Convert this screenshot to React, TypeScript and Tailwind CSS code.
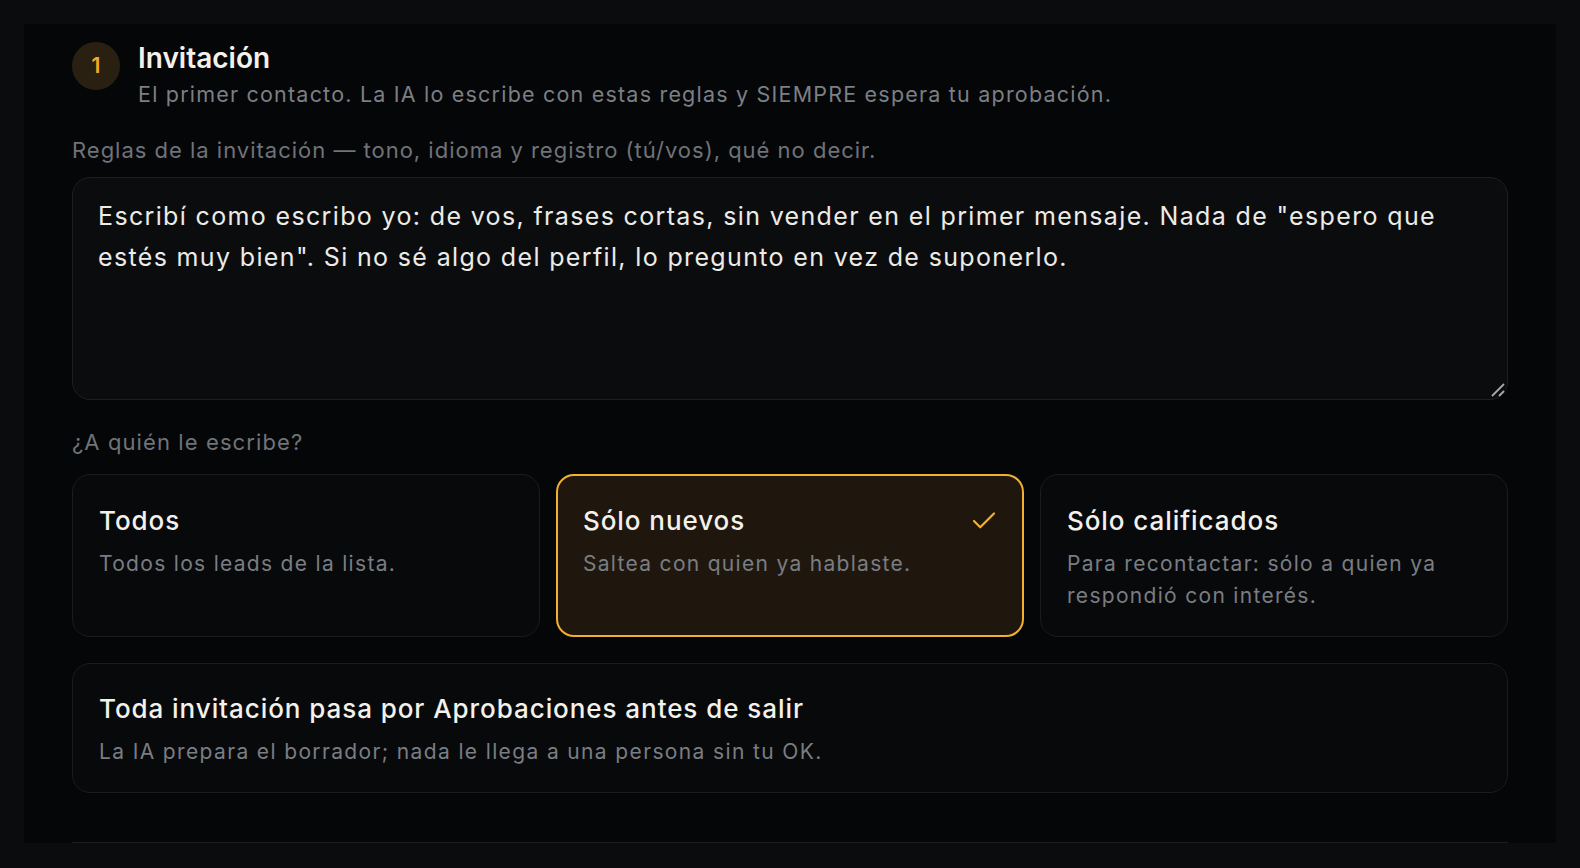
import React, { useState } from "react";
import { Check } from "lucide-react";

type Audience = "todos" | "nuevos" | "calificados";

const AUDIENCES: { id: Audience; title: string; desc: string }[] = [
  { id: "todos", title: "Todos", desc: "Todos los leads de la lista." },
  { id: "nuevos", title: "Sólo nuevos", desc: "Saltea con quien ya hablaste." },
  {
    id: "calificados",
    title: "Sólo calificados",
    desc: "Para recontactar: sólo a quien ya respondió con interés.",
  },
];

const DEFAULT_RULES =
  'Escribí como escribo yo: de vos, frases cortas, sin vender en el primer mensaje. Nada de "espero que estés muy bien". Si no sé algo del perfil, lo pregunto en vez de suponerlo.';

export default function App() {
  const [rules, setRules] = useState(DEFAULT_RULES);
  const [audience, setAudience] = useState<Audience>("nuevos");

  return (
    <div className="min-h-screen bg-[#0b0c0e] px-[24px] pt-[24px] pb-[25px] font-['Inter',sans-serif] antialiased">
      <div className="bg-[#050608] px-[48px] pt-[16px]">
        <section className="border-b border-[#1c1d21] pb-[49px]">
          {/* Step header */}
          <div className="flex items-start gap-[18px]">
            <div className="mt-[2px] flex h-[48px] w-[48px] shrink-0 items-center justify-center rounded-full bg-[#2a2012] text-[21px] font-semibold text-[#f3a928]">
              1
            </div>
            <div>
              <h2 className="text-[28px] font-semibold leading-[36px] text-[#f3f1ea]">Invitación</h2>
              <p className="mt-[3px] text-[21.5px] leading-[30px] tracking-[0.056em] text-[#7c7f84]">
                El primer contacto. La IA lo escribe con estas reglas y SIEMPRE espera tu aprobación.
              </p>
            </div>
          </div>

          {/* Rules */}
          <label
            htmlFor="invite-rules"
            className="mt-[26px] block text-[22px] leading-[30px] tracking-[0.045em] text-[#707378]"
          >
            Reglas de la invitación — tono, idioma y registro (tú/vos), qué no decir.
          </label>
          <div className="relative mt-[12px]">
            <textarea
              id="invite-rules"
              value={rules}
              onChange={(e) => setRules(e.target.value)}
              className="block h-[223px] w-full resize-none rounded-[18px] border border-[#1e1f23] bg-[#0b0c0e] px-[25px] pt-[18px] text-[25px] leading-[41px] tracking-[0.054em] text-[#ecebe6] outline-none"
            />
            {/* resize grip */}
            <svg
              className="pointer-events-none absolute right-[3px] bottom-[3px] h-[14px] w-[14px]"
              viewBox="0 0 14 14"
              fill="none"
              stroke="#a9a9a9"
              strokeWidth="1.8"
            >
              <path d="M1 13 13 1" />
              <path d="M8 13 13 8" />
            </svg>
          </div>

          {/* Audience */}
          <div className="mt-[27px] text-[22px] leading-[30px] tracking-[0.05em] text-[#707378]">
            ¿A quién le escribe?
          </div>
          <div className="mt-[17px] grid grid-cols-3 gap-[16px]">
            {AUDIENCES.map((a) => {
              const active = audience === a.id;
              return (
                <button
                  key={a.id}
                  type="button"
                  onClick={() => setAudience(a.id)}
                  className={`flex flex-col justify-start rounded-[18px] text-left ${
                    active
                      ? "border-2 border-[#f2b032] bg-[#1f170e] px-[25px] pt-[27px] pb-[24px]"
                      : "border border-[#1b1c1f] bg-[#08090b] px-[26px] pt-[28px] pb-[25px]"
                  }`}
                >
                  <div className="flex w-full items-center justify-between">
                    <span className="text-[26px] font-medium leading-[36px] tracking-[0.036em] text-[#f3f1ea]">
                      {a.title}
                    </span>
                    {active && (
                      <Check className="-mr-[2px] h-[30px] w-[30px] text-[#f2b032]" strokeWidth={1.75} />
                    )}
                  </div>
                  <p className="mt-[9px] text-[21px] leading-[31.5px] tracking-[0.062em] text-[#7a7d82]">
                    {a.desc}
                  </p>
                </button>
              );
            })}
          </div>

          {/* Approval note */}
          <div className="mt-[26px] rounded-[18px] border border-[#1b1c1f] bg-[#08090b] px-[26px] pt-[27px] pb-[24px]">
            <div className="text-[26px] font-medium leading-[36px] tracking-[0.036em] text-[#f3f1ea]">
              Toda invitación pasa por Aprobaciones antes de salir
            </div>
            <p className="mt-[9px] text-[21px] leading-[31.5px] tracking-[0.065em] text-[#7a7d82]">
              La IA prepara el borrador; nada le llega a una persona sin tu OK.
            </p>
          </div>
        </section>
      </div>
    </div>
  );
}
